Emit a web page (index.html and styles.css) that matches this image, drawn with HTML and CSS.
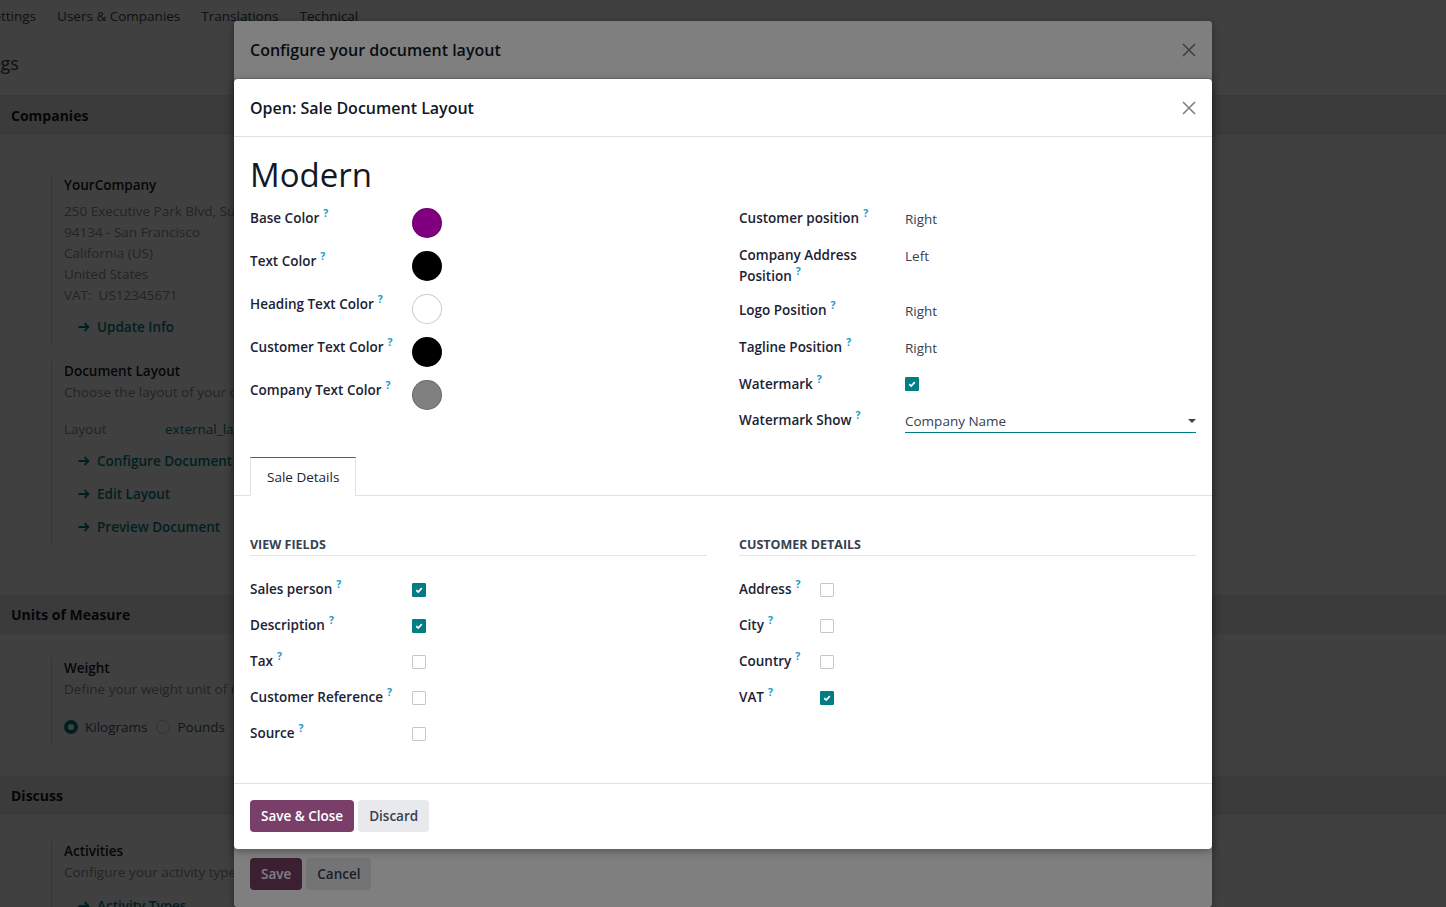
FILE: index.html
```html
<!DOCTYPE html>
<html lang="en">
<head>
<meta charset="utf-8">
<title>Configure your document layout</title>
<link rel="stylesheet" href="styles.css">
</head>
<body>
<div class="page">
  <nav class="topnav">
    <span class="nav-item nav-cut">Settings</span>
    <span class="nav-item">Users &amp; Companies</span>
    <span class="nav-item">Translations</span>
    <span class="nav-item">Technical</span>
  </nav>
  <div class="control-panel"><span class="breadcrumb">Settings</span></div>

  <div class="band">Companies</div>
  <div class="sect-body sect-first">
    <div class="block">
      <div class="block-title">YourCompany</div>
      <div class="muted first-line">250 Executive Park Blvd, Suite 3400</div>
      <div class="muted">94134 - San Francisco</div>
      <div class="muted">California (US)</div>
      <div class="muted">United States</div>
      <div class="muted">VAT:&nbsp; US12345671</div>
      <div class="link link-first"><svg class="arrow" width="12" height="10" viewBox="0 0 12 10"><path d="M0.5 5H10.5M6.5 1L10.5 5L6.5 9" fill="none" stroke="currentColor" stroke-width="1.8"/></svg>Update Info</div>
    </div>
    <div class="block">
      <div class="block-title">Document Layout</div>
      <div class="muted">Choose the layout of your documents</div>
      <div class="layout-row"><span class="layout-lbl">Layout</span><span class="layout-val">external_layout_striped</span></div>
      <div class="link link-tight"><svg class="arrow" width="12" height="10" viewBox="0 0 12 10"><path d="M0.5 5H10.5M6.5 1L10.5 5L6.5 9" fill="none" stroke="currentColor" stroke-width="1.8"/></svg>Configure Document Layout</div>
      <div class="link"><svg class="arrow" width="12" height="10" viewBox="0 0 12 10"><path d="M0.5 5H10.5M6.5 1L10.5 5L6.5 9" fill="none" stroke="currentColor" stroke-width="1.8"/></svg>Edit Layout</div>
      <div class="link"><svg class="arrow" width="12" height="10" viewBox="0 0 12 10"><path d="M0.5 5H10.5M6.5 1L10.5 5L6.5 9" fill="none" stroke="currentColor" stroke-width="1.8"/></svg>Preview Document</div>
    </div>
  </div>

  <div class="band">Units of Measure</div>
  <div class="sect-body">
    <div class="block">
      <div class="block-title">Weight</div>
      <div class="muted">Define your weight unit of measure</div>
      <div class="radio-row">
        <span class="radio radio-on"></span><span class="radio-lbl">Kilograms</span>
        <span class="radio"></span><span class="radio-lbl">Pounds</span>
      </div>
    </div>
  </div>

  <div class="band">Discuss</div>
  <div class="sect-body sect-last">
    <div class="block">
      <div class="block-title">Activities</div>
      <div class="muted">Configure your activity types</div>
      <div class="link link-last"><svg class="arrow" width="12" height="10" viewBox="0 0 12 10"><path d="M0.5 5H10.5M6.5 1L10.5 5L6.5 9" fill="none" stroke="currentColor" stroke-width="1.8"/></svg>Activity Types</div>
    </div>
  </div>
</div>

<div class="backdrop"></div>

<div class="dialog dialog-back">
  <header class="modal-header">
    <h4 class="modal-title">Configure your document layout</h4>
    <svg class="close" width="14" height="14" viewBox="0 0 14 14"><path d="M1 1L13 13M13 1L1 13" stroke="currentColor" stroke-width="1.6" fill="none"/></svg>
  </header>
  <div class="modal-body-back"></div>
  <footer class="modal-footer">
    <button class="btn btn-primary">Save</button>
    <button class="btn btn-secondary">Cancel</button>
  </footer>
</div>

<div class="dialog dialog-front">
  <header class="modal-header">
    <h4 class="modal-title">Open: Sale Document Layout</h4>
    <svg class="close" width="14" height="14" viewBox="0 0 14 14"><path d="M1 1L13 13M13 1L1 13" stroke="currentColor" stroke-width="1.6" fill="none"/></svg>
  </header>
  <div class="modal-body">
    <h1 class="record-title">Modern</h1>
    <div class="top-grid">
      <div class="group group-colors">
        <div class="lbl">Base Color<sup>?</sup></div>
        <div class="cell"><span class="swatch sw-purple"></span></div>
        <div class="lbl">Text Color<sup>?</sup></div>
        <div class="cell"><span class="swatch sw-black"></span></div>
        <div class="lbl">Heading Text Color<sup>?</sup></div>
        <div class="cell"><span class="swatch sw-white"></span></div>
        <div class="lbl">Customer Text Color<sup>?</sup></div>
        <div class="cell"><span class="swatch sw-black"></span></div>
        <div class="lbl">Company Text Color<sup>?</sup></div>
        <div class="cell"><span class="swatch sw-gray"></span></div>
      </div>
      <div class="group group-pos">
        <div class="lbl">Customer position<sup>?</sup></div>
        <div class="val">Right</div>
        <div class="lbl">Company Address Position<sup>?</sup></div>
        <div class="val">Left</div>
        <div class="lbl">Logo Position<sup>?</sup></div>
        <div class="val">Right</div>
        <div class="lbl">Tagline Position<sup>?</sup></div>
        <div class="val">Right</div>
        <div class="lbl">Watermark<sup>?</sup></div>
        <div class="cbcell cbcell-wm"><span class="cb cb-on"><svg width="12" height="12" viewBox="0 0 12 12"><path d="M3.2 6.2L5.2 8.1L8.8 4.2" fill="none" stroke="#fff" stroke-width="1.7"/></svg></span></div>
        <div class="lbl">Watermark Show<sup>?</sup></div>
        <div class="select"><span>Company Name</span><span class="caret"></span></div>
      </div>
    </div>

    <div class="tabs">
      <div class="tab">Sale Details</div>
    </div>

    <div class="inner-grid">
      <div>
        <div class="group-title">View Fields</div>
        <div class="group group-view">
          <div class="lbl">Sales person<sup>?</sup></div>
          <div class="cbcell"><span class="cb cb-on"><svg width="12" height="12" viewBox="0 0 12 12"><path d="M3.2 6.2L5.2 8.1L8.8 4.2" fill="none" stroke="#fff" stroke-width="1.7"/></svg></span></div>
          <div class="lbl">Description<sup>?</sup></div>
          <div class="cbcell"><span class="cb cb-on"><svg width="12" height="12" viewBox="0 0 12 12"><path d="M3.2 6.2L5.2 8.1L8.8 4.2" fill="none" stroke="#fff" stroke-width="1.7"/></svg></span></div>
          <div class="lbl">Tax<sup>?</sup></div>
          <div class="cbcell"><span class="cb"></span></div>
          <div class="lbl">Customer Reference<sup>?</sup></div>
          <div class="cbcell"><span class="cb"></span></div>
          <div class="lbl">Source<sup>?</sup></div>
          <div class="cbcell"><span class="cb"></span></div>
        </div>
      </div>
      <div>
        <div class="group-title">Customer Details</div>
        <div class="group group-cust">
          <div class="lbl">Address<sup>?</sup></div>
          <div class="cbcell"><span class="cb"></span></div>
          <div class="lbl">City<sup>?</sup></div>
          <div class="cbcell"><span class="cb"></span></div>
          <div class="lbl">Country<sup>?</sup></div>
          <div class="cbcell"><span class="cb"></span></div>
          <div class="lbl">VAT<sup>?</sup></div>
          <div class="cbcell"><span class="cb cb-on"><svg width="12" height="12" viewBox="0 0 12 12"><path d="M3.2 6.2L5.2 8.1L8.8 4.2" fill="none" stroke="#fff" stroke-width="1.7"/></svg></span></div>
        </div>
      </div>
    </div>
  </div>
  <footer class="modal-footer">
    <button class="btn btn-primary">Save &amp; Close</button>
    <button class="btn btn-secondary">Discard</button>
  </footer>
</div>
</body>
</html>
```

FILE: styles.css
```css
* { box-sizing: border-box; }

html, body {
  margin: 0;
  padding: 0;
}

body {
  width: 1446px;
  height: 907px;
  overflow: hidden;
  position: relative;
  background: #ffffff;
  font-family: "Open Sans", "Noto Sans", "DejaVu Sans", sans-serif;
  font-size: 13.5px;
  color: #374151;
}

/* ---------- background settings page ---------- */
.page {
  width: 100%;
}

.topnav {
  display: flex;
  align-items: center;
  gap: 21px;
  height: 31px;
  color: #374151;
  font-size: 13.5px;
  white-space: nowrap;
}

.nav-cut { margin-left: -14px; }

.control-panel {
  height: 65px;
  display: flex;
  align-items: center;
  border-bottom: 1px solid #dee2e6;
}

.breadcrumb {
  font-size: 18px;
  color: #374151;
  margin-left: -48px;
}

.band {
  height: 39px;
  display: flex;
  align-items: center;
  padding-left: 11px;
  background: #e9ecef;
  font-size: 14px;
  font-weight: 700;
  color: #111827;
}

.sect-body { padding: 24px 0 32px; }
.sect-first { padding: 40px 0 51px; }
.sect-last { padding: 26px 0 0; }

.block {
  margin-left: 51px;
  border-left: 1px solid #d0d4d9;
  padding: 0 0 6px 12px;
  width: 420px;
  white-space: nowrap;
  overflow: hidden;
}

.block + .block { margin-top: 17px; }

.block-title {
  font-weight: 600;
  color: #111827;
  line-height: 21px;
}

.muted {
  color: #8a9099;
  line-height: 21px;
}

.first-line { margin-top: 5px; }

.link {
  display: flex;
  align-items: center;
  gap: 7px;
  margin: 11px 0 0 14px;
  line-height: 22px;
  font-weight: 600;
  color: #017e84;
}

.link-first { margin-top: 10px; }
.link-tight { margin-top: 10px; }
.link-last { margin-top: 12px; }

.arrow { flex: none; }

.layout-row {
  display: flex;
  margin-top: 15px;
  line-height: 22px;
}

.layout-lbl { width: 101px; color: #8a9099; }
.layout-val { color: #017e84; }

.radio-row {
  display: flex;
  align-items: center;
  margin-top: 16px;
  line-height: 22px;
}

.radio {
  width: 14px;
  height: 14px;
  border-radius: 50%;
  border: 1px solid #c0c4c9;
  margin-right: 7px;
}

.radio-on { border: 4px solid #017e84; background: #fff; }

.radio-lbl { color: #4b5563; margin-right: 9px; }

/* ---------- overlays ---------- */
.backdrop {
  position: absolute;
  inset: 0;
  background: rgba(0, 0, 0, 0.75);
}

/* ---------- dialogs ---------- */
.dialog {
  position: absolute;
  left: 234px;
  width: 978px;
  background: #ffffff;
  border-radius: 4px;
  display: flex;
  flex-direction: column;
  box-shadow: 0 2px 8px rgba(0, 0, 0, 0.35);
}

.dialog-back { top: 21px; height: 886px; }

.dialog-back::after {
  content: "";
  position: absolute;
  inset: 0;
  border-radius: 4px;
  background: rgba(0, 0, 0, 0.5);
}

.dialog-front { top: 79px; height: 770px; }

.modal-header {
  height: 58px;
  flex: none;
  display: flex;
  align-items: center;
  justify-content: space-between;
  padding: 0 16px;
  border-bottom: 1px solid #dee2e6;
}

.modal-title {
  margin: 0;
  font-size: 16px;
  font-weight: 600;
  color: #111827;
}

.close { color: #808080; flex: none; }

.modal-body-back { flex: 1; }

.modal-footer {
  flex: none;
  display: flex;
  gap: 4px;
  padding: 16px 16px 17px;
  border-top: 1px solid #dee2e6;
}

.btn {
  height: 32px;
  padding: 0 11px;
  border: 0;
  border-radius: 4px;
  font-family: inherit;
  font-size: 13.5px;
  font-weight: 600;
  display: inline-flex;
  align-items: center;
}

.btn-primary { background: #7a3f69; color: #ffffff; }
.btn-secondary { background: #e7e9ed; color: #374151; }

.modal-body {
  flex: 1;
  min-height: 0;
  padding: 16px 16px 0;
  overflow: hidden;
}

.record-title {
  margin: 2px 0 0;
  font-size: 33px;
  line-height: 40px;
  font-weight: 400;
  color: #111827;
}

.top-grid {
  margin-top: 13px;
  display: grid;
  grid-template-columns: 1fr 1fr;
  column-gap: 32px;
  align-items: start;
}

.group {
  display: grid;
  row-gap: 13px;
  align-items: start;
}

.group-colors { grid-template-columns: 162px 1fr; }
.group-pos { grid-template-columns: 166px 1fr; }
.group-view { grid-template-columns: 162px 1fr; }
.group-cust { grid-template-columns: 81px 1fr; }

.lbl {
  font-weight: 600;
  color: #1c2233;
  line-height: 21px;
  padding-right: 10px;
}

.lbl sup {
  color: #1c98cc;
  font-size: 10.5px;
  font-weight: 700;
  margin-left: 4px;
  vertical-align: 6px;
  line-height: 0;
}

.cell { height: 30px; }

.swatch {
  display: block;
  width: 30px;
  height: 30px;
  border-radius: 50%;
  border: 1.5px solid rgba(0, 0, 0, 0.2);
}

.sw-purple { background: #800080; }
.sw-black { background: #000000; }
.sw-white { background: #ffffff; }
.sw-gray { background: #808080; }

.val {
  line-height: 21px;
  padding-top: 1px;
  height: 24px;
  color: #374151;
}

.cbcell { height: 23px; padding-top: 4px; }
.cbcell-wm { padding-top: 3px; }

.cb {
  display: flex;
  align-items: center;
  justify-content: center;
  width: 14px;
  height: 14px;
  border: 1px solid #c4c7cc;
  border-radius: 1px;
  background: #ffffff;
}

.cb-on { background: #017e84; border-color: #017e84; }

.select {
  display: flex;
  align-items: center;
  justify-content: space-between;
  height: 23px;
  line-height: 21px;
  border-bottom: 1px solid #017e84;
  color: #374151;
}

.caret {
  width: 0;
  height: 0;
  border-left: 4px solid transparent;
  border-right: 4px solid transparent;
  border-top: 4px solid #374151;
  margin-right: 0;
}

.tabs {
  display: flex;
  margin: 24px -16px 0;
  padding-left: 16px;
  border-bottom: 1px solid #dee2e6;
}

.tab {
  height: 39px;
  margin-bottom: -1px;
  padding: 0 16px;
  display: flex;
  align-items: center;
  background: #ffffff;
  border: 1px solid #dee2e6;
  border-top-color: #714b67;
  border-bottom-color: #ffffff;
  color: #1c2233;
}

.inner-grid {
  display: grid;
  grid-template-columns: 1fr 1fr;
  column-gap: 32px;
  margin-top: 39px;
}

.group-title {
  font-size: 12.5px;
  font-weight: 700;
  text-transform: uppercase;
  line-height: 20px;
  color: #374151;
  border-bottom: 1px solid #e2e5e9;
  margin-bottom: 23px;
}
```
